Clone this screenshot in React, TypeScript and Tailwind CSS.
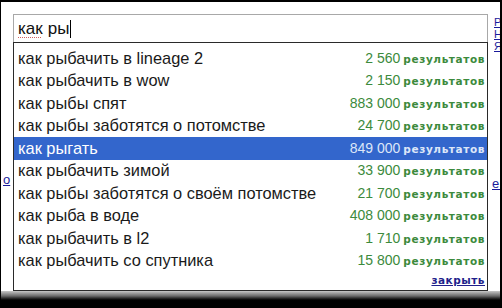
const ROWS = [
  { q: "как рыбачить в lineage 2", n: "2 560" },
  { q: "как рыбачить в wow", n: "2 150" },
  { q: "как рыбы спят", n: "883 000" },
  { q: "как рыбы заботятся о потомстве", n: "24 700" },
  { q: "как рыгать", n: "849 000" },
  { q: "как рыбачить зимой", n: "33 900" },
  { q: "как рыбы заботятся о своём потомстве", n: "21 700" },
  { q: "как рыба в воде", n: "408 000" },
  { q: "как рыбачить в l2", n: "1 710" },
  { q: "как рыбачить со спутника", n: "15 800" },
];

export default function App() {
  return (
    <div className="relative h-[308px] w-[502px] overflow-hidden bg-black pl-[1px] pr-[2px] pt-[2px] font-['Liberation_Sans',Arial,sans-serif]">
      <div className="relative h-[289px] bg-white px-[12px] pt-[12px]">
        {/* bits of the page underneath */}
        <div className="absolute right-0 top-[14px] flex w-[6px] flex-col overflow-hidden text-[11px] leading-[12px] text-[#1a1a9a]">
          <span className="underline">Р</span>
          <span className="underline">Н</span>
          <span className="underline">Я</span>
        </div>
        <span className="absolute left-[2px] top-[168px] text-[13px] text-[#1a1a9a] underline">о</span>
        <span className="absolute right-[0px] top-[172px] w-[8px] overflow-hidden text-[13px] text-[#1a1a9a] underline">е.</span>

        <div className="flex h-[28px] items-center border border-b-0 border-[#a8a8a8] pl-[4px] text-[17px] text-[#111]">
          <span className="underline decoration-[#d06060] decoration-dotted decoration-1 underline-offset-[3px]">как</span>
          <span className="ml-[5px]">ры</span>
          <span className="ml-[1px] h-[18px] w-[1px] bg-black" />
        </div>

        <div className="relative flex flex-col border border-[#2a2a2a] pt-[4px]">
          {ROWS.map((r, i) => {
            const sel = i === 4;
            return (
              <div
                key={r.q}
                className={`flex h-[22.5px] items-center justify-between pl-[4px] pr-[2px] ${sel ? "bg-[#3366cc] text-white" : "text-[#1a1a1a]"}`}
              >
                <span className="text-[16.4px]">{r.q}</span>
                <span className={`flex items-baseline gap-[3px] ${sel ? "text-[#dde6f8]" : "text-[#3c8a3c]"}`}>
                  <span className="text-[14px]">{r.n}</span>
                  <span className="font-['DejaVu_Sans',Verdana,sans-serif] text-[10.5px] font-bold tracking-[0.6px]">результатов</span>
                </span>
              </div>
            );
          })}
          <div className="flex h-[18px] items-center justify-end pr-[2px]">
            <span className="font-['DejaVu_Sans',Verdana,sans-serif] text-[10.5px] font-bold tracking-[0.5px] text-[#1f1f8c] underline">закрыть</span>
          </div>
        </div>
      </div>
      <div className="h-[10px] bg-gradient-to-b from-[#c8c8c8] via-[#6a6a6a] to-black" />
    </div>
  );
}
